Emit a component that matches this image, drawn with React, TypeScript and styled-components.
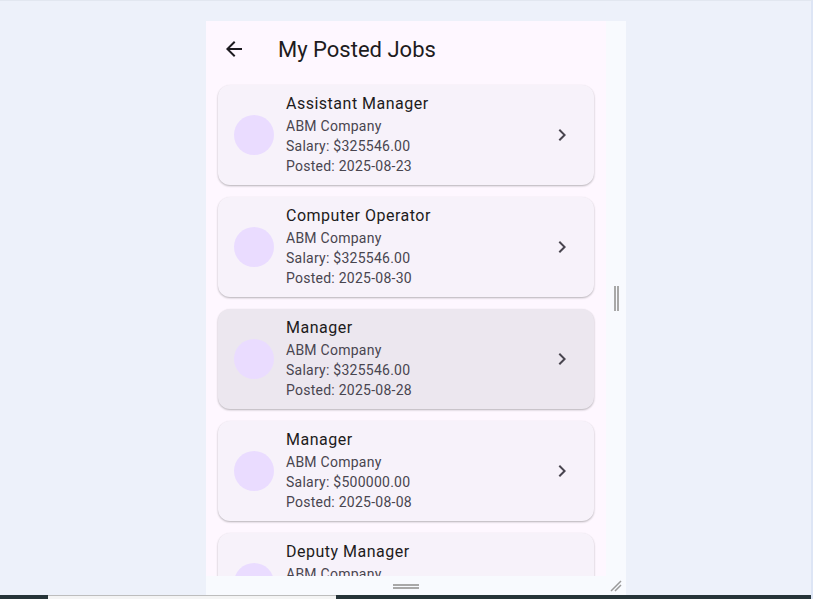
import React from "react";
import styled, { createGlobalStyle } from "styled-components";

const GlobalStyle = createGlobalStyle`
  html, body {
    margin: 0;
    padding: 0;
    background: #edf1fa;
    overflow: hidden;
    font-family: Roboto, "Noto Sans", sans-serif;
  }
`;

const Page = styled.div`
  width: 813px;
  height: 599px;
  display: flex;
  flex-direction: column;
  border-top: 1px solid #e2e7f0;
  border-right: 2px solid #dde5f5;
  box-sizing: border-box;
`;

const Stage = styled.div`
  flex: 1;
  display: flex;
  align-items: flex-start;
  padding: 20px 0 0 206px;
`;

const Device = styled.div`
  width: 420px;
  height: 574px;
  display: grid;
  grid-template-columns: 400px 20px;
  grid-template-rows: 555px 19px;
  background: #f8fafe;
`;

const Screen = styled.div`
  background: #fef7ff;
  display: flex;
  flex-direction: column;
  overflow: hidden;
`;

const AppBar = styled.div`
  height: 56px;
  flex-shrink: 0;
  display: flex;
  align-items: center;
`;

const Leading = styled.div`
  width: 56px;
  display: flex;
  justify-content: center;
  align-items: center;
  color: #1d1b20;
`;

const Title = styled.h1`
  margin: 2px 0 0 16px;
  font-size: 22px;
  font-weight: 400;
  color: #1d1b20;
  line-height: 28px;
`;

const List = styled.div`
  display: flex;
  flex-direction: column;
  gap: 12px;
  padding: 8px 12px;
`;

const Card = styled.div<{ $active?: boolean }>`
  flex-shrink: 0;
  height: 100px;
  box-sizing: border-box;
  border-radius: 12px;
  background: ${(p) => (p.$active ? "#ece7ef" : "#f7f2fa")};
  box-shadow: 0 1px 2px rgba(0, 0, 0, 0.24), 0 1px 3px rgba(0, 0, 0, 0.06);
  display: flex;
  align-items: center;
  padding: 0 20px 0 16px;
`;

const Avatar = styled.div`
  width: 40px;
  height: 40px;
  border-radius: 50%;
  background: #eadcff;
  flex-shrink: 0;
`;

const Body = styled.div`
  flex: 1;
  margin-left: 12px;
  align-self: flex-start;
  padding-top: 7px;
  display: flex;
  flex-direction: column;
`;

const JobTitle = styled.div`
  font-size: 16px;
  line-height: 24px;
  letter-spacing: 0.5px;
  color: #1d1b20;
`;

const Line = styled.div`
  font-size: 14px;
  line-height: 20px;
  letter-spacing: 0.25px;
  color: #49454f;
`;

const Trailing = styled.div`
  width: 24px;
  height: 24px;
  color: #49454f;
`;

const SideStrip = styled.div`
  display: flex;
  align-items: center;
  justify-content: center;
`;

const VHandle = styled.div`
  width: 5px;
  height: 25px;
  border-left: 2px solid #a8a8a8;
  border-right: 2px solid #a8a8a8;
  box-sizing: border-box;
`;

const BottomStrip = styled.div`
  display: flex;
  align-items: center;
  justify-content: center;
`;

const HHandle = styled.div`
  width: 26px;
  height: 5px;
  border-top: 2px solid #a8a8a8;
  border-bottom: 2px solid #a8a8a8;
  box-sizing: border-box;
  margin-top: 2px;
`;

const Corner = styled.div`
  display: flex;
  align-items: center;
  justify-content: center;
`;

const Taskbar = styled.div`
  height: 4px;
  display: flex;
  background: #263438;
`;

const TaskSlot = styled.div`
  margin-left: 48px;
  width: 288px;
  background: #f4f4f4;
  border-top: 1px solid #bdbdbd;
  box-sizing: border-box;
`;

type Job = { title: string; salary: string; posted: string };

const jobs: Job[] = [
  { title: "Assistant Manager", salary: "325546.00", posted: "2025-08-23" },
  { title: "Computer Operator", salary: "325546.00", posted: "2025-08-30" },
  { title: "Manager", salary: "325546.00", posted: "2025-08-28" },
  { title: "Manager", salary: "500000.00", posted: "2025-08-08" },
  { title: "Deputy Manager", salary: "325546.00", posted: "2025-08-15" },
];

const BackIcon = () => (
  <svg width="24" height="24" viewBox="0 0 24 24" fill="currentColor">
    <path d="M20 11H7.83l5.59-5.59L12 4l-8 8 8 8 1.41-1.41L7.83 13H20v-2z" />
  </svg>
);

const ChevronIcon = () => (
  <svg width="24" height="24" viewBox="0 0 24 24" fill="currentColor">
    <path d="M10 6L8.59 7.41 13.17 12l-4.58 4.59L10 18l6-6z" />
  </svg>
);

const GripIcon = () => (
  <svg width="14" height="14" viewBox="0 0 14 14">
    <path d="M2 12L12 2M6 12L12 6" stroke="#9a9a9a" strokeWidth="1.5" />
  </svg>
);

const App = () => {
  return (
    <>
      <GlobalStyle />
      <Page>
        <Stage>
          <Device>
            <Screen>
              <AppBar>
                <Leading>
                  <BackIcon />
                </Leading>
                <Title>My Posted Jobs</Title>
              </AppBar>
              <List>
                {jobs.map((job, i) => (
                  <Card key={i} $active={i === 2}>
                    <Avatar />
                    <Body>
                      <JobTitle>{job.title}</JobTitle>
                      <Line>ABM Company</Line>
                      <Line>Salary: ${job.salary}</Line>
                      <Line>Posted: {job.posted}</Line>
                    </Body>
                    <Trailing>
                      <ChevronIcon />
                    </Trailing>
                  </Card>
                ))}
              </List>
            </Screen>
            <SideStrip>
              <VHandle />
            </SideStrip>
            <BottomStrip>
              <HHandle />
            </BottomStrip>
            <Corner>
              <GripIcon />
            </Corner>
          </Device>
        </Stage>
        <Taskbar>
          <TaskSlot />
        </Taskbar>
      </Page>
    </>
  );
};

export default App;
